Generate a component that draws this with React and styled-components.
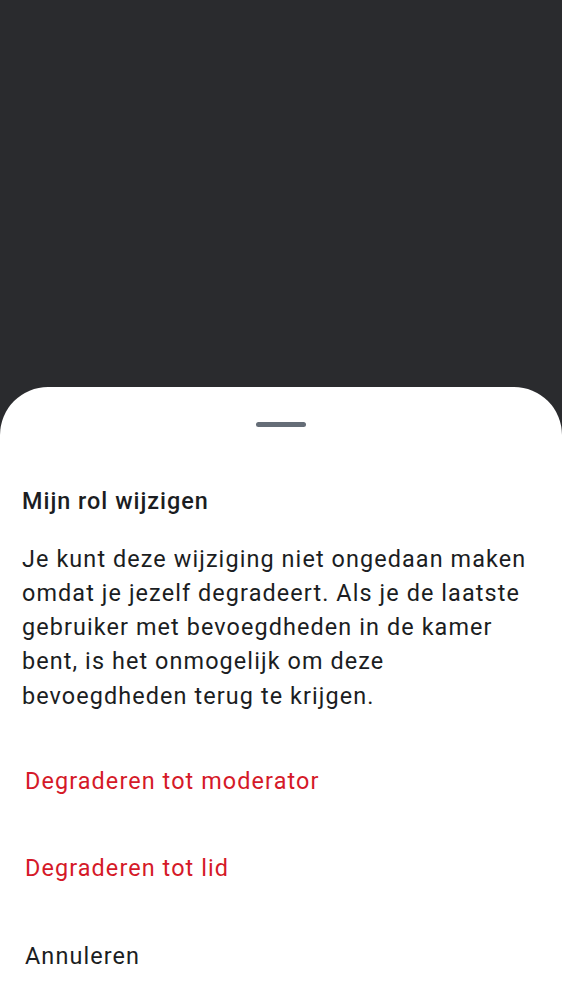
import React from "react";
import styled, { createGlobalStyle } from "styled-components";

const GlobalStyle = createGlobalStyle`
  html, body {
    margin: 0;
    padding: 0;
    background: #2a2b2e;
  }
  body {
    font-family: Roboto, "Noto Sans", sans-serif;
  }
`;

const Screen = styled.div`
  display: flex;
  flex-direction: column;
  height: 1000px;
  overflow: hidden;
  background: #2a2b2e;
`;

const Backdrop = styled.div`
  flex: 0 0 387px;
`;

const Sheet = styled.div`
  flex: 1;
  background: #ffffff;
  border-radius: 48px 48px 0 0;
  display: flex;
  flex-direction: column;
`;

const HandleRow = styled.div`
  display: flex;
  justify-content: center;
  padding-top: 35px;
`;

const Handle = styled.div`
  width: 50px;
  height: 5px;
  border-radius: 3px;
  background: #656d77;
`;

const Title = styled.h2`
  margin: 59px 0 0;
  padding: 0 22px;
  font-size: 23.4px;
  font-weight: 500;
  line-height: 30px;
  letter-spacing: 1px;
  color: #1b1d22;
`;

const Body = styled.p`
  margin: 25.5px 0 0;
  padding: 0 30px 0 22px;
  font-size: 23.4px;
  font-weight: 400;
  line-height: 34.3px;
  letter-spacing: 1.1px;
  color: #1b1d22;
`;

const Actions = styled.div`
  display: flex;
  flex-direction: column;
  margin-top: 24px;
`;

const Action = styled.button`
  display: flex;
  align-items: center;
  height: 87.5px;
  padding: 0 25px;
  border: 0;
  background: transparent;
  text-align: left;
  font-family: Roboto, "Noto Sans", sans-serif;
  font-size: 23.4px;
  font-weight: 400;
  line-height: 28px;
  letter-spacing: 1.1px;
  color: ${(p) => (p.$danger ? "#d51928" : "#1b1d22")};
`;

export default function App() {
  return (
    <>
      <GlobalStyle />
      <Screen>
        <Backdrop />
        <Sheet>
          <HandleRow>
            <Handle />
          </HandleRow>
          <Title>Mijn rol wijzigen</Title>
          <Body>
            Je kunt deze wijziging niet ongedaan maken omdat je jezelf
            degradeert. Als je de laatste gebruiker met bevoegdheden in de
            kamer bent, is het onmogelijk om deze bevoegdheden terug te
            krijgen.
          </Body>
          <Actions>
            <Action $danger>Degraderen tot moderator</Action>
            <Action $danger>Degraderen tot lid</Action>
            <Action>Annuleren</Action>
          </Actions>
        </Sheet>
      </Screen>
    </>
  );
}
